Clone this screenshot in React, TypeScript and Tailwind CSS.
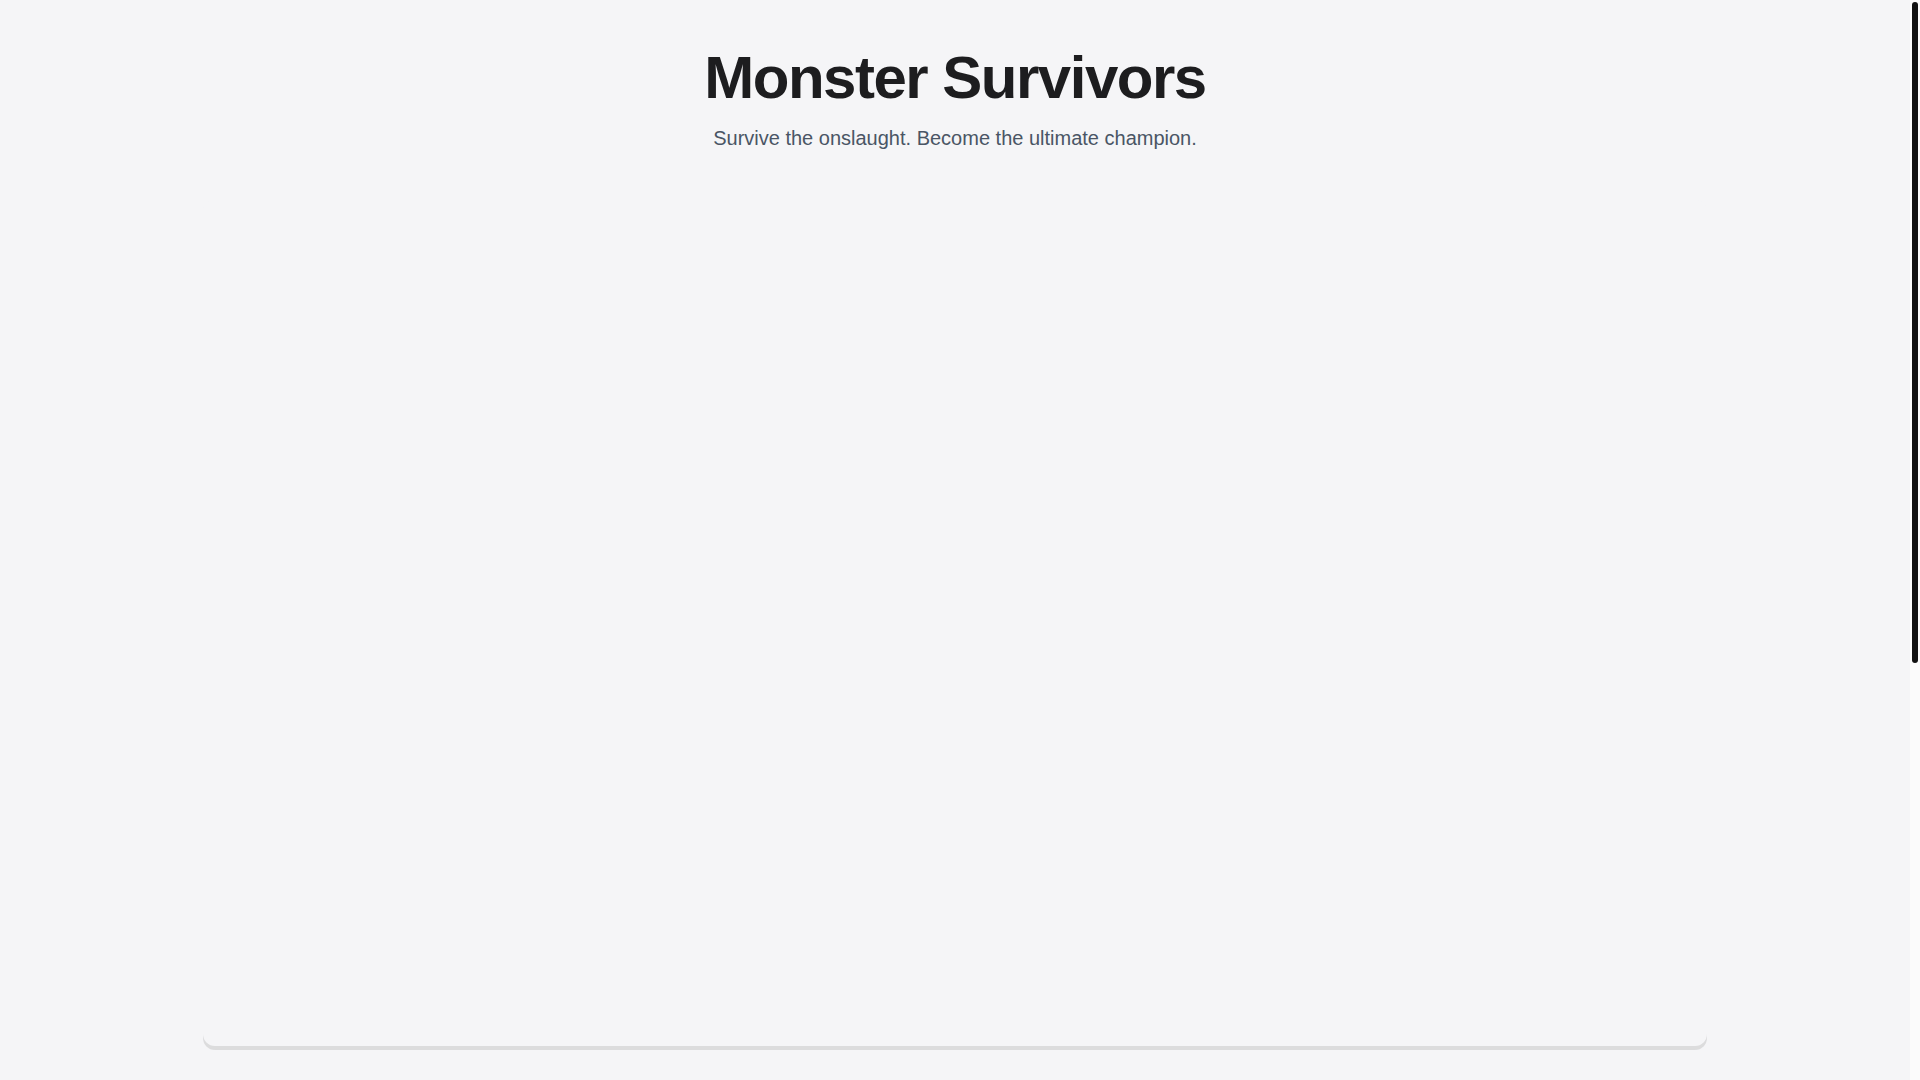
import React from "react";

export default function App() {
  return (
    <div
      className="flex h-screen bg-[#f5f5f7] text-[#1d1d1f]"
      style={{ fontFamily: '"Liberation Sans", Arial, Helvetica, sans-serif' }}
    >
      <div className="min-w-0 flex-1 overflow-y-auto [scrollbar-width:none]">
        <main className="mx-auto max-w-[1536px] px-4 pt-12 pb-[708px]">
          <header className="mb-12 flex flex-col items-center text-center">
            <h1 className="text-6xl font-bold tracking-tight text-[#1d1d1f]">
              Monster Survivors
            </h1>
            <p className="mt-4 text-xl text-gray-600">
              Survive the onslaught. Become the ultimate champion.
            </p>
          </header>
          <section className="aspect-video w-full rounded-xl bg-[#f5f5f7] shadow-[0_4px_0_rgba(0,0,0,0.1)]" />
        </main>
      </div>
      <div className="flex w-[10px] shrink-0 justify-center bg-[#fbfbfb] pt-[2px]">
        <div className="h-[661px] w-[6px] rounded-[3px] bg-[#111111]" />
      </div>
    </div>
  );
}
